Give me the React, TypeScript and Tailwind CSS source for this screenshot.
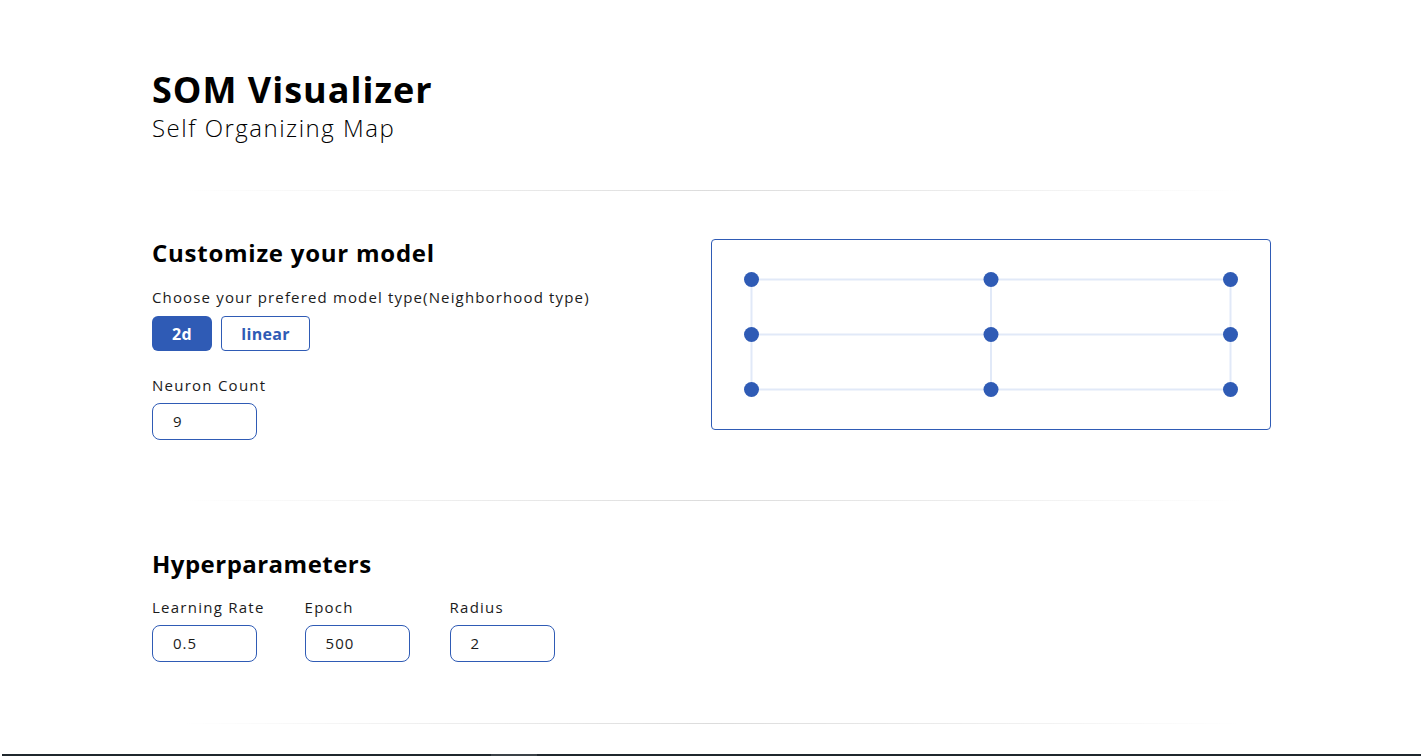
import React from "react";

const font = "font-['Open_Sans','Liberation_Sans',sans-serif]";

const Divider = () => (
    <div className="mx-auto h-px w-[1060px] bg-linear-to-r from-transparent via-[#dcdcdc] to-transparent" />
);

const NumberField = ({ label, value }: { label: string; value: string }) => (
    <div className="flex flex-col">
        <label className="text-[15px] leading-5 text-[#1b1b1b] tracking-[1.25px]">{label}</label>
        <div className="mt-2 flex h-[37px] w-[105px] items-center rounded-lg border border-[#2f5bb5] px-5 text-[15px] tracking-[1px] text-[#1b1b1b]">
            {value}
        </div>
    </div>
);

const Grid = () => {
    const xs = [39.5, 279, 518.5];
    const ys = [39.5, 94.5, 149.5];
    return (
        <svg width="558" height="189" viewBox="0 0 558 189">
            {ys.map((y) => (
                <line key={`h${y}`} x1={xs[0]} y1={y} x2={xs[2]} y2={y} stroke="#e1e9f8" strokeWidth="2" />
            ))}
            {xs.map((x) => (
                <line key={`v${x}`} x1={x} y1={ys[0]} x2={x} y2={ys[2]} stroke="#e1e9f8" strokeWidth="2" />
            ))}
            {ys.map((y) =>
                xs.map((x) => <circle key={`${x}-${y}`} cx={x} cy={y} r="7.5" fill="#2f5bb5" />)
            )}
        </svg>
    );
};

export default function App() {
    return (
        <div className={`min-h-screen bg-white pl-[2px] text-black ${font}`}>
            <header className="mx-auto w-[1119px] pt-[70px] pb-[46px]">
                <h1 className="text-[36px] font-bold leading-10 tracking-[1px]">SOM Visualizer</h1>
                <p className="mt-[2px] text-[24px] font-light leading-8 tracking-[1.5px]">Self Organizing Map</p>
            </header>

            <Divider />

            <section className="mx-auto flex w-[1119px] justify-between pt-[46px] pb-[60px]">
                <div>
                    <h2 className="text-[24px] font-bold leading-8 tracking-[0.75px]">Customize your model</h2>
                    <p className="mt-[18px] text-[15px] leading-5 text-[#1b1b1b] tracking-[1.15px]">
                        Choose your prefered model type(Neighborhood type)
                    </p>
                    <div className="mt-[9px] flex gap-[9px]">
                        <button className="h-[35px] w-[60px] rounded-md bg-[#2f5bb5] text-[16px] font-bold tracking-[0.3px] text-white">
                            2d
                        </button>
                        <button className="h-[35px] w-[89px] rounded border border-[#2f5bb5] text-[16px] font-bold tracking-[0.3px] text-[#2f5bb5]">
                            linear
                        </button>
                    </div>
                    <div className="mt-6">
                        <NumberField label="Neuron Count" value="9" />
                    </div>
                </div>
                <div className="mt-[2px] h-[191px] w-[560px] rounded border border-[#2f5bb5]">
                    <Grid />
                </div>
            </section>

            <Divider />

            <section className="mx-auto w-[1119px] pt-[47px] pb-[61px]">
                <h2 className="text-[24px] font-bold leading-8 tracking-[0.47px]">Hyperparameters</h2>
                <div className="mt-[17px] flex gap-10">
                    <NumberField label="Learning Rate" value="0.5" />
                    <NumberField label="Epoch" value="500" />
                    <NumberField label="Radius" value="2" />
                </div>
            </section>

            <Divider />

            <footer className="mt-[30px] flex h-[80px] bg-[#1f272d] pl-[489px]">
                <div className="h-[40px] w-[46px] bg-[#3a4147]" />
            </footer>
        </div>
    );
}
